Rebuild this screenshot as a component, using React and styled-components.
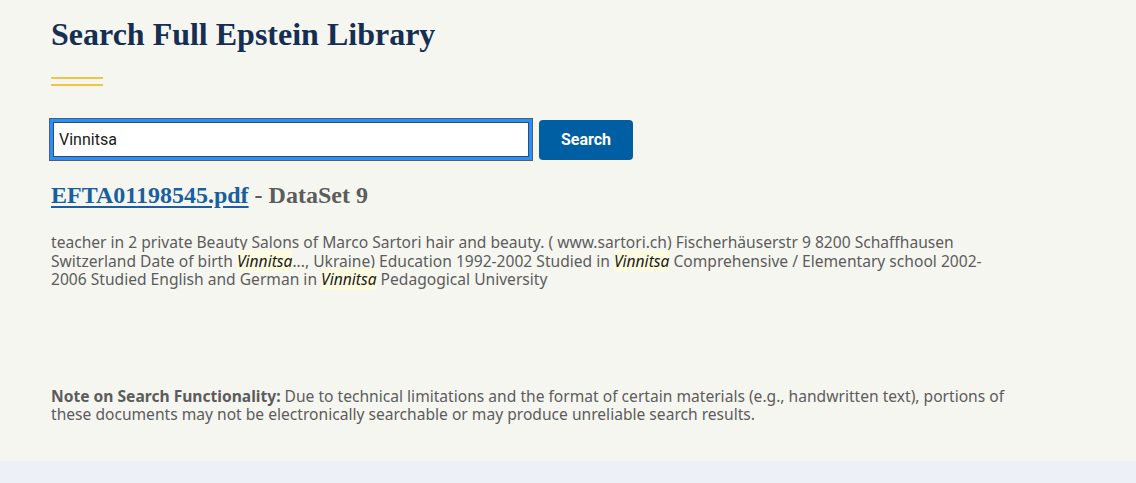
import React from "react";
import styled, { createGlobalStyle } from "styled-components";

const GlobalStyle = createGlobalStyle`
  html, body {
    margin: 0;
    padding: 0;
    background: #f6f6f1;
  }
`;

const snippet = [
  { text: "teacher in 2 private Beauty Salons of Marco Sartori hair and beauty. ( www.sartori.ch) Fischerhäuserstr 9 8200 Schaffhausen Switzerland Date of birth " },
  { hit: "Vinnitsa" },
  { text: "..., Ukraine) Education 1992-2002 Studied in " },
  { hit: "Vinnitsa" },
  { text: " Comprehensive / Elementary school 2002-2006 Studied English and German in " },
  { hit: "Vinnitsa" },
  { text: " Pedagogical University" },
];

const App = () => {
  return (
    <Page>
      <GlobalStyle />
      <Main>
        <Title>Search Full Epstein Library</Title>
        <Rule />
        <SearchForm onSubmit={(e) => e.preventDefault()}>
          <SearchInput defaultValue="Vinnitsa" />
          <SearchButton type="submit">Search</SearchButton>
        </SearchForm>
        <Result>
          <ResultTitle>
            <FileLink href="#">EFTA01198545.pdf</FileLink> - DataSet 9
          </ResultTitle>
          <Snippet>
            {snippet.map((part, i) =>
              part.hit ? <Hit key={i}>{part.hit}</Hit> : <span key={i}>{part.text}</span>
            )}
          </Snippet>
        </Result>
        <Note>
          <strong>Note on Search Functionality:</strong> Due to technical limitations and the
          format of certain materials (e.g., handwritten text), portions of these documents may
          not be electronically searchable or may produce unreliable search results.
        </Note>
      </Main>
      <Footer />
    </Page>
  );
};

const Page = styled.div`
  min-height: 483px;
  display: flex;
  flex-direction: column;
`;

const Main = styled.main`
  padding: 13px 0 0 51px;
  height: 461px;
  box-sizing: border-box;
`;

const Title = styled.h1`
  margin: 0;
  font-family: "Liberation Serif", serif;
  font-weight: 700;
  font-size: 32px;
  line-height: 42px;
  color: #162e51;
`;

const Rule = styled.div`
  width: 52px;
  height: 9px;
  margin-top: 22px;
  border-top: 2px solid #f1c541;
  border-bottom: 2px solid #f1c541;
  box-sizing: border-box;
`;

const SearchForm = styled.form`
  display: flex;
  align-items: center;
  gap: 6px;
  margin-top: 32px;
  margin-left: -2px;
`;

const SearchInput = styled.input`
  width: 484px;
  height: 43px;
  box-sizing: border-box;
  padding: 0 9px;
  border: 1px solid #565c65;
  outline: none;
  box-shadow: inset 0 0 0 3px #2491ff, inset 0 0 0 4px #3a4a5a;
  background: #fff;
  font-family: Roboto, "Liberation Sans", sans-serif;
  font-size: 16px;
  color: #1b1b1b;
`;

const SearchButton = styled.button`
  width: 94px;
  height: 40px;
  border: 0;
  border-radius: 4px;
  background: #005ea2;
  color: #fff;
  font-family: Roboto, "Liberation Sans", sans-serif;
  font-weight: 700;
  font-size: 16px;
  cursor: pointer;
`;

const Result = styled.section`
  margin-top: 19px;
`;

const ResultTitle = styled.h3`
  margin: 0;
  font-family: "Liberation Serif", serif;
  font-weight: 700;
  font-size: 24px;
  line-height: 30px;
  color: #5c5c5c;
`;

const FileLink = styled.a`
  color: #1a5f9e;
  text-decoration: underline;
  text-underline-offset: 3px;
`;

const BodyText = styled.p`
  width: 980px;
  font-family: "Noto Sans", "Liberation Sans", sans-serif;
  font-size: 15.6px;
  line-height: 18.5px;
  color: #5c5c5c;
`;

const Snippet = styled(BodyText)`
  width: 958px;
  margin: 23px 0 0;
`;

const Hit = styled.em`
  font-style: italic;
  color: #1b1b1b;
  background: #fdfbe0;
`;

const Note = styled(BodyText)`
  margin: 98px 0 0;

  strong {
    font-weight: 700;
  }
`;

const Footer = styled.footer`
  background: #eef0f8;
  flex: 1;
`;

export default App;
